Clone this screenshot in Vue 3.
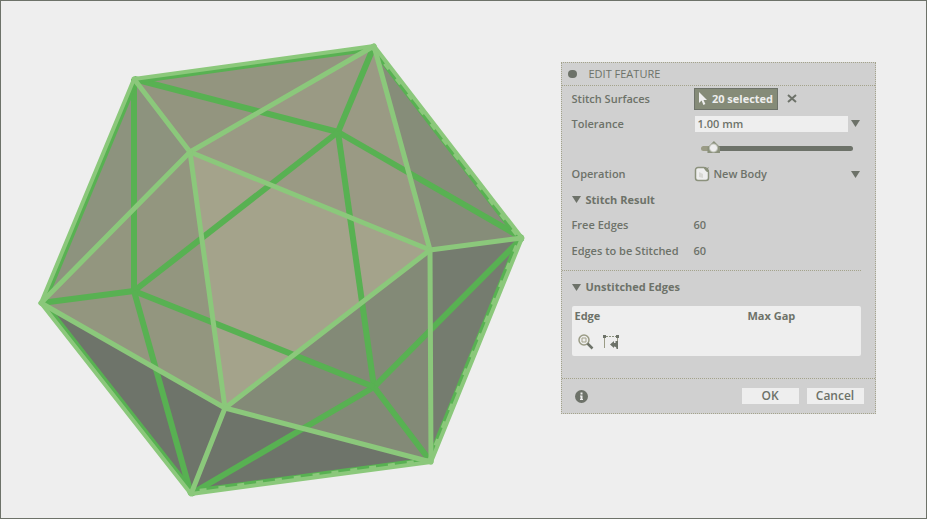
<script setup>
import { ref } from 'vue'

const tolerance = ref('1.00 mm')
const slider = ref(5)
const operation = ref('New Body')

const P = {
  A: [134, 79], B: [374, 46], C: [522, 238], D: [431, 462], E: [191, 494], F: [41, 303],
  G: [190, 152], H: [430, 250], I: [225, 408],
  J: [338, 132], K: [374, 387], L: [134, 291],
}
const centre = [282, 270]
const pts = (s) => [...s].map((k) => P[k].join(',')).join(' ')
const inset = (s) =>
  [...s].map((k) => P[k].map((v, i) => centre[i] + (v - centre[i]) * 0.988).join(',')).join(' ')

const faces = [
  ['ABG', '#93957f'], ['AGF', '#8d937e'], ['BGH', '#9a9a84'], ['BHC', '#868d79'],
  ['GHI', '#a4a38b'], ['GFI', '#93967f'], ['FIE', '#6e746a'], ['EID', '#6e746a'],
  ['IHD', '#838a77'], ['HCD', '#757c6f'],
]
const backEdges = ['JA', 'JB', 'JC', 'JK', 'JL', 'KC', 'KD', 'KE', 'KL', 'LA', 'LF', 'LE']
const frontEdges = ['GA', 'GB', 'GH', 'GI', 'GF', 'HB', 'HC', 'HD', 'HI', 'IF', 'IE', 'ID']
</script>

<template>
  <main class="viewport">
    <svg class="model" viewBox="30 36 504 470" role="img" aria-label="Icosahedron">
      <polygon v-for="f in faces" :key="f[0]" :points="pts(f[0])" :fill="f[1]" />
      <g class="back">
        <polyline v-for="e in backEdges" :key="e" :points="pts(e)" />
      </g>
      <polygon class="rim-dark" :points="inset('ABCDEF')" />
      <polyline class="rim-dash" :points="inset('BCDE')" />
      <g class="front">
        <polyline v-for="e in frontEdges" :key="e" :points="pts(e)" />
      </g>
      <polygon class="rim-light" :points="pts('ABCDEF')" />
    </svg>

    <form class="panel" @submit.prevent>
      <header class="title">
        <span class="dot"></span>
        <h1>EDIT FEATURE</h1>
      </header>

      <section class="fields">
        <div class="row">
          <span>Stitch Surfaces</span>
          <div class="pick">
            <button type="button" class="selected">
              <svg width="10" height="14" viewBox="0 0 10 14"><path d="M1 0v11l2.600-2.400L5.400 13l2-.9-1.900-4.100H9z" fill="#eee" /></svg>
              20 selected
            </button>
            <button type="button" class="clear" aria-label="Clear selection">
              <svg width="10" height="9" viewBox="0 0 10 9"><path d="M1 1l8 7M9 1l-8 7" stroke="#6d7269" stroke-width="2" /></svg>
            </button>
          </div>
        </div>
        <div class="row">
          <label for="tol">Tolerance</label>
          <div class="combo">
            <input id="tol" v-model="tolerance" class="text" type="text" />
            <svg class="arrow" width="9" height="7" viewBox="0 0 9 7"><path d="M0 0h9L4.500 7z" /></svg>
          </div>
        </div>
        <div class="row">
          <span></span>
          <input v-model="slider" class="range" type="range" min="0" max="100" aria-label="Tolerance" />
        </div>
        <div class="row tall">
          <label for="op">Operation</label>
          <div class="combo">
            <svg class="body-icon" width="16" height="16" viewBox="0 0 16 16">
              <path d="M4 1.500h6L14.500 6v6a2.500 2.500 0 0 1-2.500 2.500H4A2.500 2.500 0 0 1 1.500 12V4A2.500 2.500 0 0 1 4 1.500z" fill="#eee" stroke="#8b917c" stroke-width="1.500" />
              <path d="M5 6l4 2v4l-4-1z" fill="#d8d8d4" />
              <path d="M10 1h2l1 1 2-1-1 2 1 1v2h-2l-2-2z" fill="#8b917c" />
            </svg>
            <select id="op" v-model="operation"><option>New Body</option></select>
            <svg class="arrow" width="9" height="7" viewBox="0 0 9 7"><path d="M0 0h9L4.500 7z" /></svg>
          </div>
        </div>
        <h2><svg class="arrow" width="9" height="7" viewBox="0 0 9 7"><path d="M0 0h9L4.500 7z" /></svg>Stitch Result</h2>
        <div class="row tall"><span>Free Edges</span><output>60</output></div>
        <div class="row tall"><span>Edges to be Stitched</span><output>60</output></div>
      </section>

      <section class="unstitched">
        <h2><svg class="arrow" width="9" height="7" viewBox="0 0 9 7"><path d="M0 0h9L4.500 7z" /></svg>Unstitched Edges</h2>
        <div class="list">
          <table>
            <thead><tr><th scope="col">Edge</th><th scope="col">Max Gap</th></tr></thead>
          </table>
          <div class="tools">
            <button type="button" aria-label="Zoom to edge">
              <svg width="16" height="16" viewBox="0 0 16 16" fill="none">
                <circle cx="6" cy="6" r="5" stroke="#9a9b85" stroke-width="1.500" />
                <path d="M4 4h4v4H4z" stroke="#a4a38b" />
                <path d="M9.500 9.500l5 5" stroke="#6d7269" stroke-width="2.500" />
              </svg>
            </button>
            <button type="button" aria-label="Reset edges">
              <svg width="16" height="16" viewBox="0 0 16 16" fill="none">
                <path d="M1.500 14V3M14.500 3v6" stroke="#9a9b85" />
                <path d="M3 2.500h10" stroke="#8b917c" stroke-dasharray="2 1" />
                <path d="M0 1h3v3H0zM13 1h3v3h-3z" fill="#6d7269" />
                <path d="M7 10.500L11 7v2h1.500V7H15v8h-1.500c0-1.500-.5-2.500-2.500-2.500V14z" fill="#6d7269" />
              </svg>
            </button>
          </div>
        </div>
      </section>

      <footer class="actions">
        <svg class="info" width="13" height="13" viewBox="0 0 13 13">
          <circle cx="6.500" cy="6.500" r="6.500" fill="#6d7269" />
          <path d="M5.500 2.500h2v2h-2zM5 5.500h2.500V9H8v1H5V9h.5V6.500H5z" fill="#eee" />
        </svg>
        <button type="submit" class="btn">OK</button>
        <button type="button" class="btn">Cancel</button>
      </footer>
    </form>
  </main>
</template>

<style>
body { background: #eee; }
</style>

<style scoped>
.viewport {
  box-sizing: border-box;
  min-height: 100vh;
  display: grid;
  grid-template-columns: 62fr 38fr;
  align-items: start;
  border: 1px solid #6d7269;
  background: #eee;
  color: #6d7269;
  font: 600 11px/16px "Open Sans", "Noto Sans", sans-serif;
}
.model { width: 504px; max-width: 100%; margin: 35px 0 0 29px; display: block; }
.back { stroke: #58b152; stroke-width: 6; }
.front { stroke: #8bc87b; stroke-width: 5; stroke-linecap: round; }
.rim-dark { fill: none; stroke: #58b152; stroke-width: 5; stroke-linejoin: round; }
.rim-light { fill: none; stroke: #8bc87b; stroke-width: 4; stroke-linejoin: round; }
.rim-dash { fill: none; stroke: #8bc87b; stroke-width: 3; stroke-dasharray: 7 12; }
.panel {
  box-sizing: border-box;
  width: 315px;
  margin: 61px 0 0 -14px;
  background: #d0d0d0;
  border: 1px dotted #a4a38b;
}
h1, h2 { margin: 0; font-size: 11px; line-height: 16px; }
h1 { font-weight: 500; }
h2 { display: flex; align-items: center; gap: 5px; font-weight: 700; }
.title {
  display: flex;
  align-items: center;
  gap: 12px;
  height: 22px;
  padding-left: 6px;
  border-bottom: 1px dotted #a4a38b;
}
.dot { width: 9px; height: 8px; border-radius: 4px; background: #6d7269; }
.fields { padding: 0 15px 6px 10px; }
.row {
  display: grid;
  grid-template-columns: 122px minmax(0, 1fr);
  align-items: center;
  height: 25px;
}
.row.tall { height: 26px; }
.fields h2 { height: 25px; }
.pick, .combo { display: flex; align-items: center; }
button, input, select { font: inherit; color: inherit; }
button { border: 0; padding: 0; background: none; }
button svg { display: block; }
.selected {
  display: flex;
  align-items: center;
  justify-content: center;
  gap: 4px;
  width: 84px;
  height: 22px;
  border: 1px solid #6d7269;
  background: #858b78;
  color: #eee;
  font-weight: 700;
}
.clear { margin-left: 9px; }
.text {
  flex: 1;
  min-width: 0;
  height: 16px;
  box-sizing: border-box;
  margin: 0 3px 0 1px;
  padding: 0 3px;
  border: 0;
  background: #eee;
}
.arrow { flex: none; fill: #6d7269; }
.range { appearance: none; width: 152px; height: 14px; margin: 0 0 0 7px; background: none; }
.range::-webkit-slider-runnable-track {
  height: 5px;
  border-radius: 3px;
  background: linear-gradient(90deg, #9a9b85 8px, #6d7269 8px);
}
.range::-webkit-slider-thumb {
  appearance: none;
  width: 13px;
  height: 12px;
  margin-top: -5px;
  background: radial-gradient(circle at 50% 58%, #eee 3px, #8b917c 5px);
  clip-path: polygon(50% 0, 100% 55%, 100% 100%, 0 100%, 0 55%);
}
select { appearance: none; flex: 1; min-width: 0; border: 0; padding: 0 0 0 4px; background: none; }
.unstitched { margin: 0 14px 0 0; padding: 8px 0 22px 10px; border-top: 1px dotted #a4a38b; }
.list { box-sizing: border-box; margin-top: 11px; padding: 2px 3px; min-height: 50px; background: #eee; border-radius: 2px; }
table { width: 100%; border-collapse: collapse; table-layout: fixed; }
th { padding: 0; text-align: left; font-weight: 700; }
th:first-child { width: 173px; }
.tools { display: flex; gap: 9px; padding: 10px 3px 0; }
.actions {
  display: flex;
  align-items: center;
  gap: 8px;
  height: 34px;
  padding: 0 11px 0 13px;
  border-top: 1px dotted #a4a38b;
}
.info { margin-right: auto; }
.btn { width: 57px; height: 16px; background: #eee; font-size: 12px; }
</style>
